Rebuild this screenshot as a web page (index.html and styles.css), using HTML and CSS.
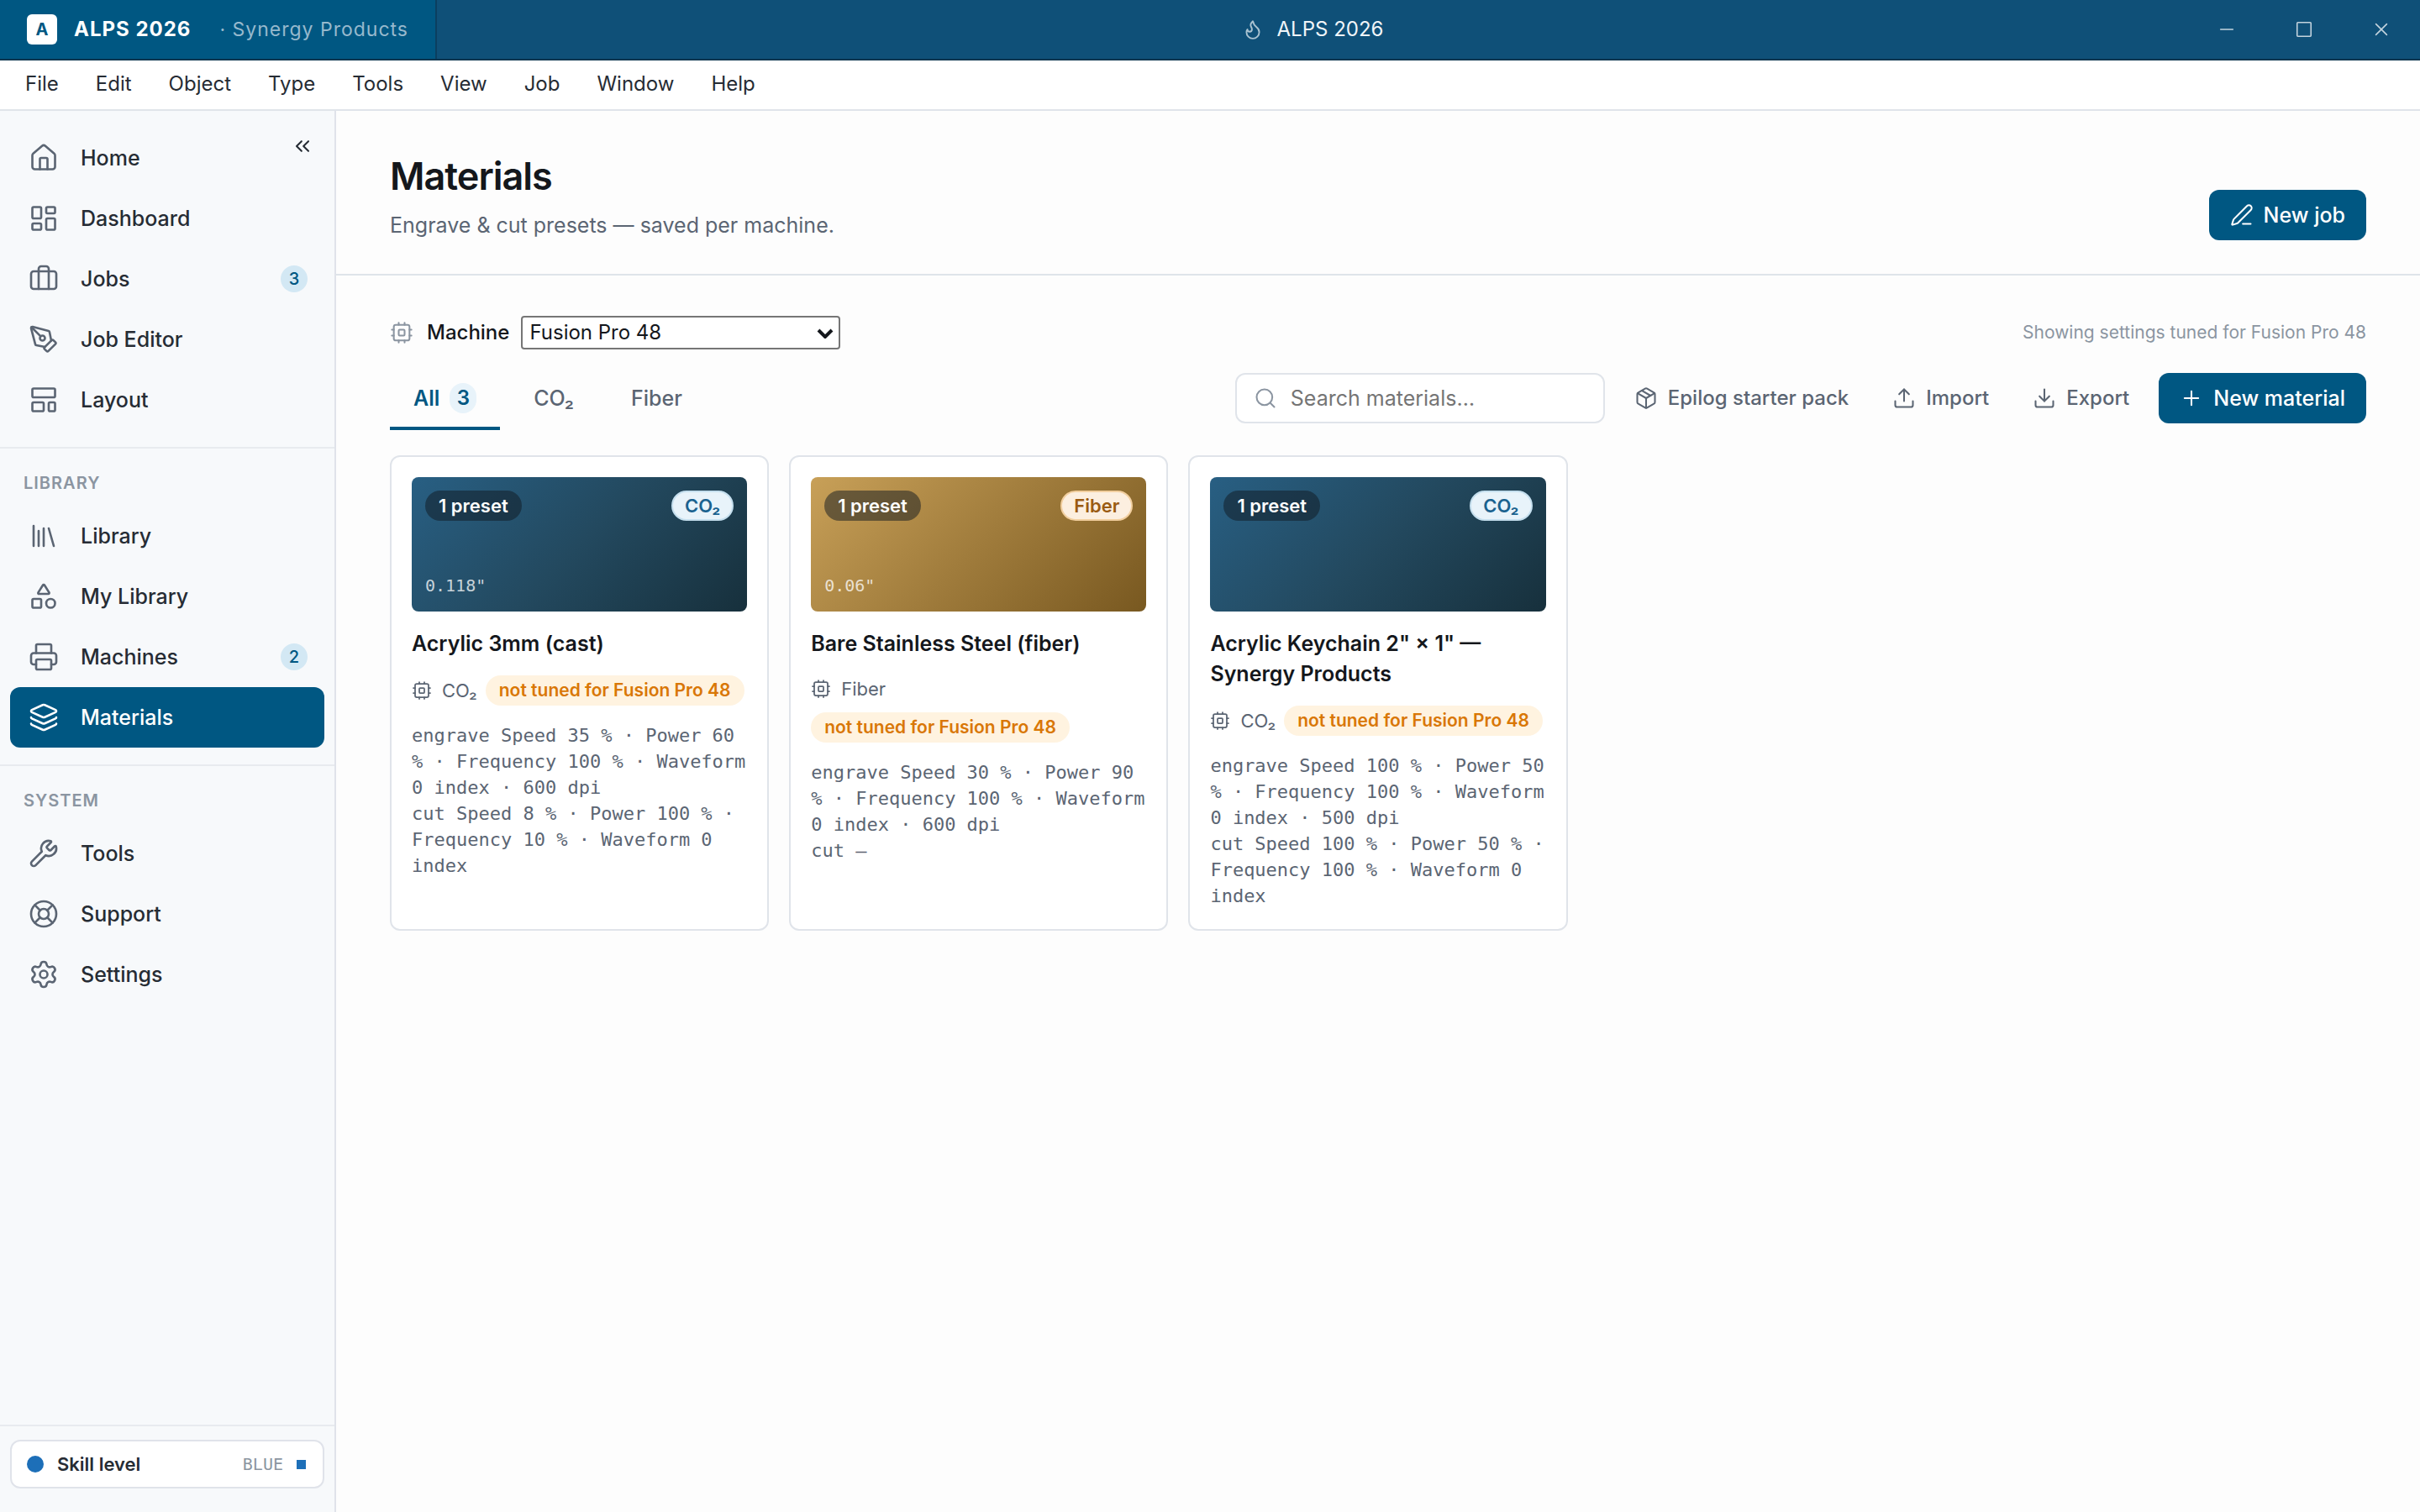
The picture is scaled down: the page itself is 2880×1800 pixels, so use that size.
FILE: index.html
```
<!DOCTYPE html>
<html lang="en">
<head>
  <meta charset="UTF-8" />
  <meta name="viewport" content="width=device-width, initial-scale=1.0"/>
  <title>ALPS 2026 - Materials</title>
  <link rel="stylesheet" href="styles.css">
</head>
<body>
  <!-- Icon sprite -->
  <svg class="sprite" aria-hidden="true">
    <symbol id="i-flame" viewBox="0 0 24 24"><path d="M8.5 14.5A2.5 2.5 0 0 0 11 12c0-1.38-.5-2-1-3-1.072-2.143-.224-4.054 2-6 .5 2.5 2 4.9 4 6.5 2 1.6 3 3.5 3 5.5a7 7 0 1 1-14 0c0-1.153.433-2.294 1-3a2.5 2.5 0 0 0 2.5 2.5z"/></symbol>
    <symbol id="i-home" viewBox="0 0 24 24"><path d="M15 21v-8a1 1 0 0 0-1-1h-4a1 1 0 0 0-1 1v8"/><path d="M3 10a2 2 0 0 1 .709-1.528l7-6a2 2 0 0 1 2.582 0l7 6A2 2 0 0 1 21 10v9a2 2 0 0 1-2 2H5a2 2 0 0 1-2-2z"/></symbol>
    <symbol id="i-dashboard" viewBox="0 0 24 24"><rect width="7" height="9" x="3" y="3" rx="1"/><rect width="7" height="5" x="14" y="3" rx="1"/><rect width="7" height="9" x="14" y="12" rx="1"/><rect width="7" height="5" x="3" y="16" rx="1"/></symbol>
    <symbol id="i-jobs" viewBox="0 0 24 24"><path d="M16 20V4a2 2 0 0 0-2-2h-4a2 2 0 0 0-2 2v16"/><rect width="20" height="14" x="2" y="6" rx="2"/></symbol>
    <symbol id="i-pen-tool" viewBox="0 0 24 24"><path d="M15.707 21.293a1 1 0 0 1-1.414 0l-1.586-1.586a1 1 0 0 1 0-1.414l5.586-5.586a1 1 0 0 1 1.414 0l1.586 1.586a1 1 0 0 1 0 1.414z"/><path d="m18 13-1.375-6.874a1 1 0 0 0-.746-.776L3.235 2.028a1 1 0 0 0-1.207 1.207L5.35 15.879a1 1 0 0 0 .776.746L13 18"/><path d="m2.3 2.3 7.286 7.286"/><circle cx="11" cy="11" r="2"/></symbol>
    <symbol id="i-layout" viewBox="0 0 24 24"><rect width="18" height="7" x="3" y="3" rx="1"/><rect width="9" height="7" x="3" y="14" rx="1"/><rect width="5" height="7" x="16" y="14" rx="1"/></symbol>
    <symbol id="i-library" viewBox="0 0 24 24"><path d="m16 6 4 14M12 6v14M8 8v12M4 4v16"/></symbol>
    <symbol id="i-shapes" viewBox="0 0 24 24"><path d="M8.3 10a.7.7 0 0 1-.626-1.079L11.4 3a.7.7 0 0 1 1.198-.043L16.3 8.9a.7.7 0 0 1-.572 1.1z"/><rect width="7" height="7" x="3" y="14" rx="1"/><circle cx="17.5" cy="17.5" r="3.5"/></symbol>
    <symbol id="i-printer" viewBox="0 0 24 24"><path d="M6 18H4a2 2 0 0 1-2-2v-5a2 2 0 0 1 2-2h16a2 2 0 0 1 2 2v5a2 2 0 0 1-2 2h-2"/><path d="M6 9V3a1 1 0 0 1 1-1h10a1 1 0 0 1 1 1v6"/><rect width="12" height="8" x="6" y="14" rx="1"/></symbol>
    <symbol id="i-layers" viewBox="0 0 24 24"><path d="M12.83 2.18a2 2 0 0 0-1.66 0L2.6 6.08a1 1 0 0 0 0 1.83l8.58 3.91a2 2 0 0 0 1.66 0l8.58-3.9a1 1 0 0 0 0-1.83z"/><path d="M2 12a1 1 0 0 0 .58.91l8.6 3.91a2 2 0 0 0 1.65 0l8.58-3.9A1 1 0 0 0 22 12"/><path d="M2 17a1 1 0 0 0 .58.91l8.6 3.91a2 2 0 0 0 1.65 0l8.58-3.9A1 1 0 0 0 22 17"/></symbol>
    <symbol id="i-wrench" viewBox="0 0 24 24"><path d="M14.7 6.3a1 1 0 0 0 0 1.4l1.6 1.6a1 1 0 0 0 1.4 0l3.106-3.105c.32-.322.863-.22.983.218a6 6 0 0 1-8.259 7.057l-7.91 7.91a1 1 0 0 1-2.999-3l7.91-7.91a6 6 0 0 1 7.057-8.259c.438.12.54.662.219.984z"/></symbol>
    <symbol id="i-support" viewBox="0 0 24 24"><circle cx="12" cy="12" r="10"/><path d="m4.93 4.93 4.24 4.24M14.83 9.17l4.24-4.24M14.83 14.83l4.24 4.24M9.17 14.83l-4.24 4.24"/><circle cx="12" cy="12" r="4"/></symbol>
    <symbol id="i-settings" viewBox="0 0 24 24"><path d="M9.671 4.136a2.34 2.34 0 0 1 4.659 0 2.34 2.34 0 0 0 3.319 1.915 2.34 2.34 0 0 1 2.33 4.033 2.34 2.34 0 0 0 0 3.831 2.34 2.34 0 0 1-2.33 4.033 2.34 2.34 0 0 0-3.319 1.915 2.34 2.34 0 0 1-4.659 0 2.34 2.34 0 0 0-3.32-1.915 2.34 2.34 0 0 1-2.33-4.033 2.34 2.34 0 0 0 0-3.831A2.34 2.34 0 0 1 6.35 6.051a2.34 2.34 0 0 0 3.319-1.915"/><circle cx="12" cy="12" r="3"/></symbol>
    <symbol id="i-collapse" viewBox="0 0 24 24"><path d="m11 17-5-5 5-5M18 17l-5-5 5-5"/></symbol>
    <symbol id="i-pen" viewBox="0 0 24 24"><path d="M13 21h8"/><path d="M21.174 6.812a1 1 0 0 0-3.986-3.987L3.842 16.174a2 2 0 0 0-.5.83l-1.321 4.352a.5.5 0 0 0 .623.622l4.353-1.32a2 2 0 0 0 .83-.497z"/></symbol>
    <symbol id="i-cpu" viewBox="0 0 24 24"><rect width="16" height="16" x="4" y="4" rx="2"/><rect width="6" height="6" x="9" y="9" rx="1"/><path d="M15 2v2M15 20v2M2 15h2M2 9h2M20 15h2M20 9h2M9 2v2M9 20v2"/></symbol>
    <symbol id="i-search" viewBox="0 0 24 24"><circle cx="11" cy="11" r="8"/><path d="m21 21-4.3-4.3"/></symbol>
    <symbol id="i-package" viewBox="0 0 24 24"><path d="M11 21.73a2 2 0 0 0 2 0l7-4A2 2 0 0 0 21 16V8a2 2 0 0 0-1-1.73l-7-4a2 2 0 0 0-2 0l-7 4A2 2 0 0 0 3 8v8a2 2 0 0 0 1 1.73z"/><path d="M12 22V12"/><path d="M3.29 7 12 12l8.71-5"/><path d="m7.5 4.27 9 5.15"/></symbol>
    <symbol id="i-upload" viewBox="0 0 24 24"><path d="M12 3v12"/><path d="m17 8-5-5-5 5"/><path d="M21 15v4a2 2 0 0 1-2 2H5a2 2 0 0 1-2-2v-4"/></symbol>
    <symbol id="i-download" viewBox="0 0 24 24"><path d="M12 15V3"/><path d="m7 10 5 5 5-5"/><path d="M21 15v4a2 2 0 0 1-2 2H5a2 2 0 0 1-2-2v-4"/></symbol>
    <symbol id="i-plus" viewBox="0 0 24 24"><path d="M5 12h14M12 5v14"/></symbol>
    <symbol id="i-chevron" viewBox="0 0 20 12"><path d="m2 2 8 8 8-8"/></symbol>
    <symbol id="i-min" viewBox="0 0 24 24"><path d="M4 12h16"/></symbol>
    <symbol id="i-max" viewBox="0 0 24 24"><rect x="3" y="3" width="18" height="18" rx="1"/></symbol>
    <symbol id="i-close" viewBox="0 0 24 24"><path d="M5 5l14 14M19 5L5 19"/></symbol>
  </svg>

  <header class="titlebar">
    <div class="brand">
      <span class="brand-logo">A</span>
      <strong class="brand-name">ALPS 2026</strong>
      <span class="brand-org">· Synergy Products</span>
    </div>
    <div class="window-title">
      <svg class="icon"><use href="#i-flame"/></svg>
      <span>ALPS 2026</span>
    </div>
    <div class="window-controls">
      <button aria-label="Minimize"><svg class="icon"><use href="#i-min"/></svg></button>
      <button aria-label="Maximize"><svg class="icon"><use href="#i-max"/></svg></button>
      <button aria-label="Close"><svg class="icon"><use href="#i-close"/></svg></button>
    </div>
  </header>

  <nav class="menubar">
    <button>File</button>
    <button>Edit</button>
    <button>Object</button>
    <button>Type</button>
    <button>Tools</button>
    <button>View</button>
    <button>Job</button>
    <button>Window</button>
    <button>Help</button>
  </nav>

  <div class="shell">
    <aside class="sidebar">
      <button class="collapse" aria-label="Collapse sidebar"><svg class="icon"><use href="#i-collapse"/></svg></button>

      <nav class="nav-group">
        <a class="nav-item" href="#home"><svg class="icon"><use href="#i-home"/></svg>Home</a>
        <a class="nav-item" href="#dashboard"><svg class="icon"><use href="#i-dashboard"/></svg>Dashboard</a>
        <a class="nav-item" href="#jobs"><svg class="icon"><use href="#i-jobs"/></svg>Jobs<span class="nav-count">3</span></a>
        <a class="nav-item" href="#editor"><svg class="icon"><use href="#i-pen-tool"/></svg>Job Editor</a>
        <a class="nav-item" href="#layout"><svg class="icon"><use href="#i-layout"/></svg>Layout</a>
      </nav>

      <nav class="nav-group">
        <h2>LIBRARY</h2>
        <a class="nav-item" href="#library"><svg class="icon"><use href="#i-library"/></svg>Library</a>
        <a class="nav-item" href="#my-library"><svg class="icon"><use href="#i-shapes"/></svg>My Library</a>
        <a class="nav-item" href="#machines"><svg class="icon"><use href="#i-printer"/></svg>Machines<span class="nav-count">2</span></a>
        <a class="nav-item active" href="#materials"><svg class="icon"><use href="#i-layers"/></svg>Materials</a>
      </nav>

      <nav class="nav-group">
        <h2>SYSTEM</h2>
        <a class="nav-item" href="#tools"><svg class="icon"><use href="#i-wrench"/></svg>Tools</a>
        <a class="nav-item" href="#support"><svg class="icon"><use href="#i-support"/></svg>Support</a>
        <a class="nav-item" href="#settings"><svg class="icon"><use href="#i-settings"/></svg>Settings</a>
      </nav>

      <div class="sidebar-footer">
        <button class="skill">
          <span class="skill-dot"></span>
          <span class="skill-label">Skill level</span>
          <span class="skill-value">BLUE</span>
          <span class="skill-square"></span>
        </button>
      </div>
    </aside>

    <main class="main">
      <div class="page-header">
        <div>
          <h1>Materials</h1>
          <p>Engrave &amp; cut presets — saved per machine.</p>
        </div>
        <button class="btn primary"><svg class="icon"><use href="#i-pen"/></svg>New job</button>
      </div>

      <div class="content">
        <div class="machine-row">
          <svg class="icon"><use href="#i-cpu"/></svg>
          <label for="machine">Machine</label>
          <div class="select-wrap">
            <select id="machine">
              <option>Fusion Pro 48</option>
            </select>
            <svg class="icon"><use href="#i-chevron"/></svg>
          </div>
          <span class="hint">Showing settings tuned for Fusion Pro 48</span>
        </div>

        <div class="toolbar">
          <div class="tabs">
            <button class="tab active">All <span class="tab-count">3</span></button>
            <button class="tab">CO₂</button>
            <button class="tab">Fiber</button>
          </div>
          <div class="actions">
            <div class="search">
              <svg class="icon"><use href="#i-search"/></svg>
              <input type="text" placeholder="Search materials…" aria-label="Search materials">
            </div>
            <button class="btn ghost"><svg class="icon"><use href="#i-package"/></svg>Epilog starter pack</button>
            <button class="btn ghost"><svg class="icon"><use href="#i-upload"/></svg>Import</button>
            <button class="btn ghost"><svg class="icon"><use href="#i-download"/></svg>Export</button>
            <button class="btn primary"><svg class="icon"><use href="#i-plus"/></svg>New material</button>
          </div>
        </div>

        <div class="cards">
          <article class="card">
            <div class="swatch co2">
              <div class="swatch-top"><span class="pill presets">1 preset</span><span class="pill kind">CO₂</span></div>
              <span class="thickness">0.118"</span>
            </div>
            <h3>Acrylic 3mm (cast)</h3>
            <div class="meta">
              <span class="source"><svg class="icon"><use href="#i-cpu"/></svg>CO₂</span>
              <span class="pill warn">not tuned for Fusion Pro 48</span>
            </div>
            <div class="params">
              <p>engrave Speed 35 % · Power 60 % · Frequency 100 % · Waveform 0 index · 600 dpi</p>
              <p>cut Speed 8 % · Power 100 % · Frequency 10 % · Waveform 0 index</p>
            </div>
          </article>

          <article class="card">
            <div class="swatch fiber">
              <div class="swatch-top"><span class="pill presets">1 preset</span><span class="pill kind">Fiber</span></div>
              <span class="thickness">0.06"</span>
            </div>
            <h3>Bare Stainless Steel (fiber)</h3>
            <div class="meta">
              <span class="source"><svg class="icon"><use href="#i-cpu"/></svg>Fiber</span>
              <span class="pill warn">not tuned for Fusion Pro 48</span>
            </div>
            <div class="params">
              <p>engrave Speed 30 % · Power 90 % · Frequency 100 % · Waveform 0 index · 600 dpi</p>
              <p>cut —</p>
            </div>
          </article>

          <article class="card">
            <div class="swatch co2">
              <div class="swatch-top"><span class="pill presets">1 preset</span><span class="pill kind">CO₂</span></div>
            </div>
            <h3>Acrylic Keychain 2" × 1" — Synergy Products</h3>
            <div class="meta">
              <span class="source"><svg class="icon"><use href="#i-cpu"/></svg>CO₂</span>
              <span class="pill warn">not tuned for Fusion Pro 48</span>
            </div>
            <div class="params">
              <p>engrave Speed 100 % · Power 50 % · Frequency 100 % · Waveform 0 index · 500 dpi</p>
              <p>cut Speed 100 % · Power 50 % · Frequency 100 % · Waveform 0 index</p>
            </div>
          </article>
        </div>
      </div>
    </main>
  </div>
</body>
</html>
```

FILE: styles.css
```
* {
  box-sizing: border-box;
}

body {
  margin: 0;
  min-height: 100vh;
  display: flex;
  flex-direction: column;
  font-family: Inter, "Liberation Sans", sans-serif;
  font-size: 25px;
  line-height: 36px;
  color: #14171c;
  background: #fdfdfd;
}

h1, h2, h3, p {
  margin: 0;
}

button, input, select {
  font: inherit;
  color: inherit;
}

button {
  margin: 0;
  padding: 0;
  border: none;
  background: none;
  cursor: pointer;
}

.sprite {
  position: absolute;
  width: 0;
  height: 0;
}

.icon {
  width: 28px;
  height: 28px;
  flex: none;
  fill: none;
  stroke: currentColor;
  stroke-width: 1.75;
  stroke-linecap: round;
  stroke-linejoin: round;
}

/* Title bar */
.titlebar {
  display: flex;
  height: 72px;
  background: #0f5078;
  border-bottom: 2px solid #0b354f;
  color: #fff;
}

.brand {
  width: 520px;
  padding: 0 32px;
  display: flex;
  align-items: center;
  background: #005782;
  border-right: 2px solid #0b3f60;
  font-size: 24px;
  letter-spacing: 1px;
  white-space: nowrap;
}

.brand-logo {
  width: 36px;
  height: 36px;
  margin-right: 20px;
  border-radius: 6px;
  background: #fff;
  color: #005782;
  font-size: 20px;
  font-weight: 700;
  text-align: center;
  letter-spacing: 0;
}

.brand-name {
  flex: 1;
  font-weight: 700;
}

.brand-org {
  font-size: 23px;
  color: #97b9cd;
}

.window-title {
  flex: 1;
  display: flex;
  align-items: center;
  justify-content: center;
  gap: 16px;
  font-size: 24px;
  color: #f0f5f8;
}

.window-title .icon {
  width: 26px;
  height: 26px;
  color: #aac3d1;
}

.window-controls {
  display: flex;
}

.window-controls button {
  width: 92px;
  display: grid;
  place-items: center;
  color: #c3d3de;
}

.window-controls .icon {
  width: 22px;
  height: 22px;
}

/* Menu bar */
.menubar {
  display: flex;
  gap: 4px;
  height: 60px;
  padding: 0 10px 2px;
  background: #fff;
  border-bottom: 2px solid #e0e4ea;
}

.menubar button {
  padding: 0 20px;
  font-size: 24px;
  color: #262c34;
}

.shell {
  flex: 1;
  display: flex;
}

/* Sidebar */
.sidebar {
  position: relative;
  width: 400px;
  flex: none;
  display: flex;
  flex-direction: column;
  background: #f7f9fb;
  border-right: 2px solid #e0e3ea;
}

.collapse {
  position: absolute;
  top: 28px;
  right: 24px;
  height: 28px;
  line-height: 0;
  color: #262c34;
}

.nav-group {
  padding: 0 12px 20px;
}

.nav-group:first-of-type {
  padding-top: 20px;
}

.nav-group + .nav-group {
  border-top: 2px solid #e8ebef;
}

.nav-group h2 {
  padding: 28px 16px 14px;
  font-size: 20px;
  line-height: 26px;
  font-weight: 600;
  letter-spacing: 1px;
  color: #8b95a1;
}

.nav-item {
  height: 72px;
  padding: 0 20px 0 22px;
  display: flex;
  align-items: center;
  border-radius: 12px;
  font-weight: 500;
  color: #262c34;
  text-decoration: none;
}

.nav-item .icon {
  width: 36px;
  height: 36px;
  margin-right: 26px;
  color: #5b6573;
}

.nav-item.active {
  background: #005782;
  color: #fff;
}

.nav-item.active .icon {
  color: #fff;
}

.nav-count {
  width: 32px;
  height: 32px;
  margin-left: auto;
  border-radius: 16px;
  background: #d3e8f4;
  color: #005782;
  font-size: 20px;
  line-height: 32px;
  text-align: center;
}

.sidebar-footer {
  margin-top: auto;
  padding: 16px 12px 28px;
  border-top: 2px solid #e8ebef;
}

.skill {
  width: 100%;
  height: 58px;
  padding: 0 20px 0 18px;
  display: flex;
  align-items: center;
  background: #fff;
  border: 2px solid #e0e3ea;
  border-radius: 12px;
  text-align: left;
}

.skill-dot {
  width: 20px;
  height: 20px;
  margin-right: 16px;
  border-radius: 50%;
  background: #1d6fb8;
}

.skill-label {
  flex: 1;
  font-size: 22px;
  font-weight: 600;
  color: #262c34;
}

.skill-value {
  font-family: "DejaVu Sans Mono", monospace;
  font-size: 20px;
  color: #8b95a1;
}

.skill-square {
  width: 11px;
  height: 11px;
  margin-left: 16px;
  background: #1d6fb8;
}

/* Page header */
.main {
  flex: 1;
  min-width: 0;
}

.page-header {
  padding: 52px 64px 40px;
  display: flex;
  align-items: flex-end;
  justify-content: space-between;
  border-bottom: 2px solid #dfe4ea;
}

.page-header h1 {
  margin-bottom: 14px;
  font-size: 45px;
  line-height: 52px;
  font-weight: 600;
  letter-spacing: -1px;
}

.page-header p {
  color: #5b6573;
}

.btn {
  height: 60px;
  display: flex;
  align-items: center;
  gap: 12px;
  border-radius: 12px;
  font-weight: 500;
  white-space: nowrap;
}

.btn.primary {
  padding: 0 25px;
  background: #005782;
  color: #fff;
}

.btn.ghost {
  padding: 0 17px;
  font-size: 24px;
  color: #5b6573;
}

/* Content */
.content {
  padding: 48px 64px;
}

.machine-row {
  display: flex;
  align-items: center;
  font-size: 24px;
}

.machine-row > .icon {
  margin-right: 16px;
  color: #8b95a1;
}

.machine-row label {
  margin-right: 14px;
  font-weight: 500;
}

.select-wrap {
  position: relative;
  width: 380px;
}

.select-wrap select {
  display: block;
  width: 100%;
  height: 40px;
  padding: 0 40px 0 8px;
  appearance: none;
  background: #fff;
  border: 2px solid #767676;
  border-radius: 4px;
  line-height: 36px;
}

.select-wrap .icon {
  position: absolute;
  top: 15px;
  right: 8px;
  width: 20px;
  height: 12px;
  stroke-width: 4;
  stroke-linecap: butt;
  stroke-linejoin: miter;
  pointer-events: none;
}

.hint {
  margin-left: auto;
  font-size: 21px;
  color: #8b95a1;
}

.toolbar {
  margin-top: 20px;
  display: flex;
  align-items: center;
  justify-content: space-between;
}

.tabs {
  display: flex;
  gap: 12px;
}

.tab {
  height: 76px;
  padding: 0 28px;
  display: flex;
  align-items: center;
  gap: 12px;
  border-top: 4px solid transparent;
  border-bottom: 4px solid transparent;
  font-weight: 500;
  color: #5b6573;
}

.tab.active {
  border-bottom-color: #005782;
  font-weight: 600;
  color: #005782;
}

.tab-count {
  width: 32px;
  height: 36px;
  border-radius: 16px;
  background: #e8f3fa;
  font-size: 24px;
}

.actions {
  display: flex;
  align-items: center;
  gap: 18px;
}

.search {
  width: 440px;
  height: 60px;
  padding: 0 20px;
  display: flex;
  align-items: center;
  gap: 16px;
  background: #fff;
  border: 2px solid #e0e4ea;
  border-radius: 12px;
}

.search .icon {
  color: #8b95a1;
}

.search input {
  flex: 1;
  min-width: 0;
  padding: 0;
  border: none;
  outline: none;
  background: none;
}

.search input::placeholder {
  color: #757575;
}

/* Material cards */
.cards {
  margin-top: 30px;
  display: grid;
  grid-template-columns: repeat(auto-fill, minmax(440px, 1fr));
  gap: 24px;
}

.card {
  padding: 24px;
  background: #fff;
  border: 2px solid #e0e4ea;
  border-radius: 12px;
}

.swatch {
  height: 160px;
  padding: 16px;
  display: flex;
  flex-direction: column;
  justify-content: space-between;
  border-radius: 8px;
}

.swatch.co2 {
  background: linear-gradient(135deg, #285f83, #23495f 50%, #17303c);
}

.swatch.fiber {
  background: linear-gradient(135deg, #c8a058, #785820);
}

.swatch-top {
  display: flex;
  justify-content: space-between;
}

.pill {
  height: 36px;
  padding: 0 16px;
  border-radius: 18px;
  font-size: 22px;
  line-height: 36px;
  font-weight: 600;
  white-space: nowrap;
}

.presets {
  background: rgba(15, 23, 32, 0.5);
  color: #fff;
}

.kind {
  padding: 0 14px;
  border: 2px solid #c5dfee;
  background: #e8f3fa;
  color: #1a628f;
  line-height: 32px;
}

.fiber .kind {
  border-color: #f2cf9f;
  background: #fcefe0;
  color: #9a5b12;
}

.thickness {
  font-family: "DejaVu Sans Mono", monospace;
  font-size: 20px;
  line-height: 30px;
  color: rgba(255, 255, 255, 0.75);
}

.card h3 {
  margin: 20px 0;
  font-size: 25px;
  line-height: 36px;
  font-weight: 600;
}

.meta {
  display: flex;
  flex-wrap: wrap;
  align-items: center;
  gap: 12px 10px;
}

.source {
  display: flex;
  align-items: center;
  gap: 12px;
  font-size: 22px;
  line-height: 32px;
  color: #5b6573;
}

.source .icon {
  width: 24px;
  height: 24px;
}

.warn {
  background: #fff3e0;
  color: #d97706;
  font-size: 21px;
}

.params {
  margin-top: 20px;
  font-family: "DejaVu Sans Mono", monospace;
  font-size: 22px;
  line-height: 31px;
  color: #5b6573;
}
```
